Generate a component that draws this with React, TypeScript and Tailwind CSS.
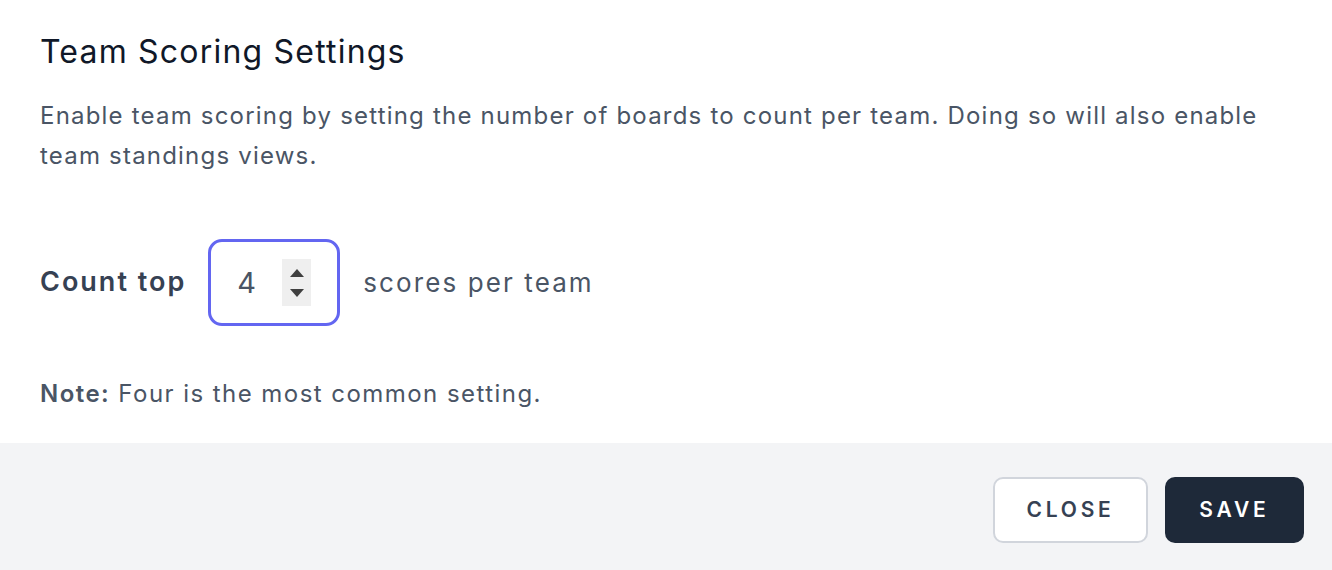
import React from "react";

const font = { fontFamily: "Inter, 'Noto Sans', sans-serif" };

function Spinner() {
  return (
    <div className="flex h-[47px] w-[29px] flex-col items-center justify-center gap-[12px] bg-[#efefef]">
      <svg width="14" height="8" viewBox="0 0 14 8">
        <path d="M7 0 L14 8 L0 8 Z" fill="#3f3f3f" />
      </svg>
      <svg width="14" height="8" viewBox="0 0 14 8">
        <path d="M0 0 L14 0 L7 8 Z" fill="#3f3f3f" />
      </svg>
    </div>
  );
}

export default function App() {
  return (
    <div className="w-[1332px] h-[570px] bg-white flex flex-col" style={font}>
      <div className="flex-1 px-10 pt-[33px]">
        <h2 className="text-[32px] leading-[38px] tracking-[1.2px] text-gray-900 font-normal">
          Team Scoring Settings
        </h2>
        <p className="mt-[25px] max-w-[1235px] text-[24px] leading-[40px] tracking-[1.2px] text-gray-600">
          Enable team scoring by setting the number of boards to count per team. Doing so will also enable team standings views.
        </p>

        <div className="mt-[63px] flex items-center">
          <span className="text-[27px] font-semibold tracking-[2px] text-gray-700">Count top</span>
          <div className="ml-[22px] flex h-[87px] w-[132px] items-center rounded-[14px] border-[3px] border-[#6366f1] pl-[26px] pr-[26px]">
            <span className="flex-1 text-[29px] text-gray-600">4</span>
            <Spinner />
          </div>
          <span className="ml-[23px] text-[26px] tracking-[2.1px] text-gray-600">scores per team</span>
        </div>

        <p className="mt-[50px] text-[24px] tracking-[1.45px] text-gray-600">
          <span className="font-semibold text-gray-600">Note:</span> Four is the most common setting.
        </p>
      </div>

      <div className="h-[127px] bg-gray-100 flex items-start justify-end gap-[17px] pr-[28px] pt-[34px]">
        <button className="h-[66px] w-[155px] rounded-[10px] border-2 border-gray-300 bg-white text-[21px] font-semibold tracking-[0.18em] text-gray-700">
          CLOSE
        </button>
        <button className="h-[66px] w-[139px] rounded-[10px] bg-gray-800 text-[21px] font-semibold tracking-[0.18em] text-white">
          SAVE
        </button>
      </div>
    </div>
  );
}
